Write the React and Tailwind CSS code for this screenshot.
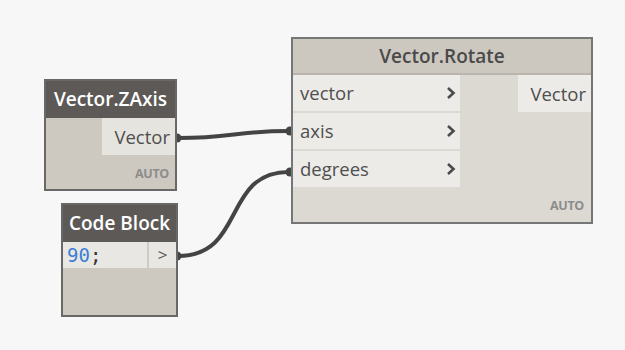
import React from 'react';

const font = { fontFamily: '"Open Sans", "Noto Sans", sans-serif' };

function Chevron() {
  return (
    <svg width="10" height="14" viewBox="0 0 10 14" className="shrink-0">
      <path d="M2 2 L7.5 7 L2 12" fill="none" stroke="#4a4a4a" strokeWidth="2.6" strokeLinejoin="miter" />
    </svg>
  );
}

function Auto() {
  return <div className="text-[12.5px] font-bold text-[#8c8c8c] tracking-tight leading-none">AUTO</div>;
}

export default function App() {
  return (
    <div className="relative w-[625px] h-[350px] bg-[#f7f7f7] overflow-hidden text-[#4f4f4f]" style={font}>
      {/* wires */}
      <svg className="absolute inset-0" width="625" height="350">
        <path d="M178 138 C 232 138, 236 131, 289 131" fill="none" stroke="#444" strokeWidth="4" />
        <path d="M178 256 C 246 256, 222 172, 289 172" fill="none" stroke="#444" strokeWidth="4" />
        <circle cx="177" cy="138" r="4.5" fill="#444" />
        <circle cx="177" cy="256" r="4.5" fill="#444" />
        <circle cx="290" cy="131" r="4.5" fill="#444" />
        <circle cx="290" cy="172" r="4.5" fill="#444" />
      </svg>

      {/* Vector.ZAxis */}
      <div className="absolute left-[44px] top-[79px] w-[133px] h-[112px] border-2 border-[#6a6867] bg-[#cdc9c1] flex flex-col">
        <div className="h-[37px] bg-[#5c5957] flex items-center justify-center text-white font-semibold text-[19px]">
          Vector.ZAxis
        </div>
        <div className="flex justify-end">
          <div className="w-[73px] h-[37px] bg-[#e6e4df] flex items-center justify-end pr-[5px] text-[18.5px]">Vector</div>
        </div>
        <div className="flex-1 flex items-end justify-end pr-[6px] pb-[9px]">
          <Auto />
        </div>
      </div>

      {/* Code Block */}
      <div className="absolute left-[61px] top-[203px] w-[117px] h-[114px] border-2 border-[#6a6867] bg-[#cdc9c1] flex flex-col">
        <div className="h-[37px] bg-[#5c5957] flex items-center justify-center text-white font-semibold text-[19px]">
          Code Block
        </div>
        <div className="h-[26px] flex bg-[#e9e7e3]">
          <div
            className="flex-1 flex items-center pl-[4px] text-[19px] text-[#3a7fd6]"
            style={{ fontFamily: '"DejaVu Sans Mono", monospace' }}
          >
            90<span className="text-[#333]">;</span>
          </div>
          <div className="w-[29px] border-l-2 border-[#cfccc6] flex items-center justify-center text-[17px] text-[#555]">&gt;</div>
        </div>
        <div className="flex-1" />
      </div>

      {/* Vector.Rotate */}
      <div className="absolute left-[291px] top-[37px] w-[302px] h-[187px] border-2 border-[#767676] bg-[#dcd9d3] flex flex-col">
        <div className="h-[36px] bg-[#ccc8c0] border-b-2 border-[#b9b5ad] flex items-center justify-center font-semibold text-[19px] text-[#4a4a4a]">
          Vector.Rotate
        </div>
        <div className="flex">
          <div className="w-[167px] flex flex-col gap-[2px]">
            {['vector', 'axis', 'degrees'].map((t) => (
              <div key={t} className="h-[36px] bg-[#ecebe8] flex items-center justify-between pl-[7px] pr-[4px] text-[18.5px]">
                <span>{t}</span>
                <Chevron />
              </div>
            ))}
          </div>
          <div className="flex-1 flex justify-end">
            <div className="w-[73px] h-[37px] bg-[#ecebe8] flex items-center justify-end pr-[5px] text-[18.5px]">Vector</div>
          </div>
        </div>
        <div className="flex-1 flex items-end justify-end pr-[7px] pb-[10px]">
          <Auto />
        </div>
      </div>
    </div>
  );
}
